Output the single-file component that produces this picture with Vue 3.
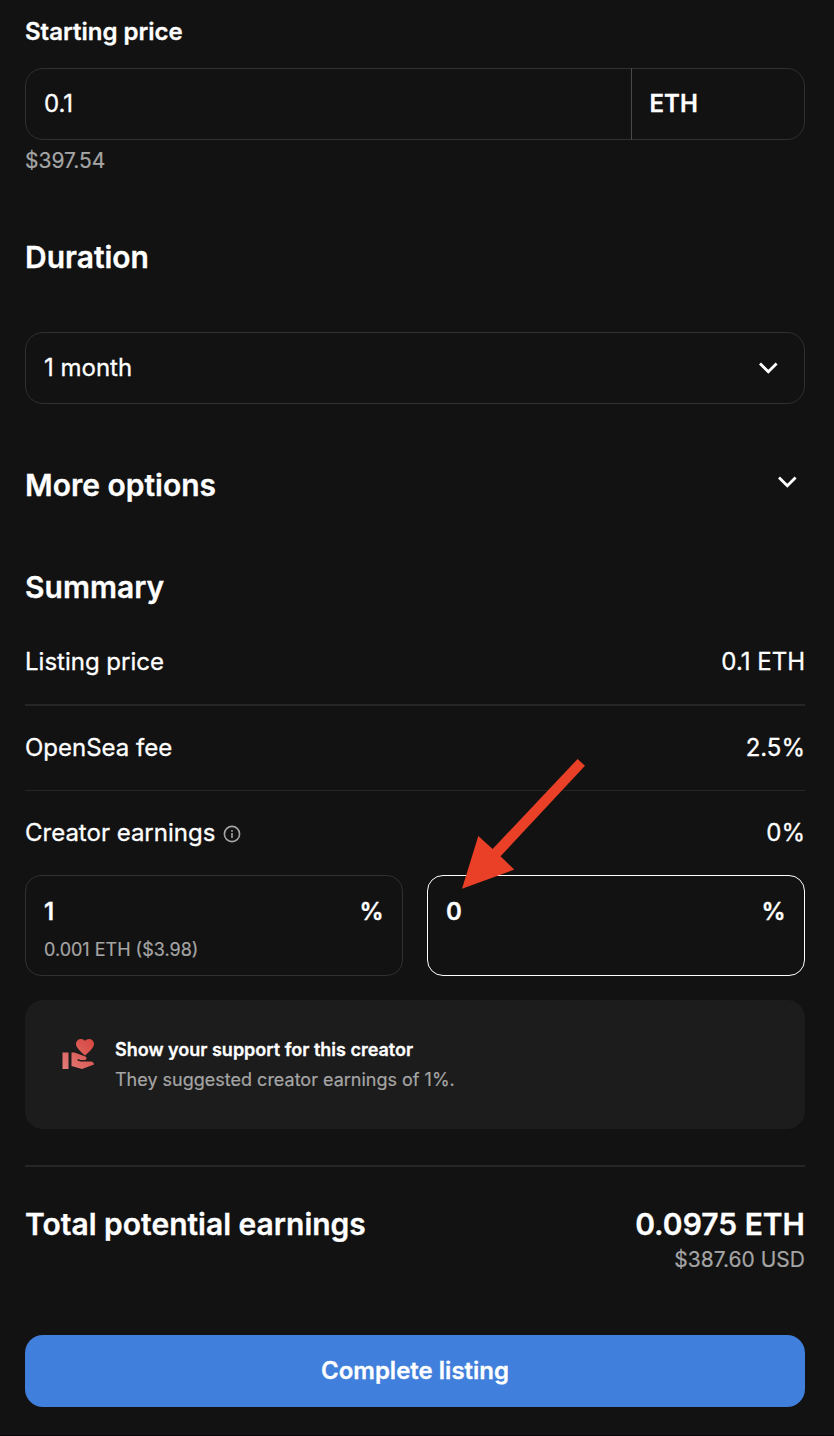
<script setup>
const chevron = 'M2 2.4 L10.3 10.7 L18.6 2.4'
const fees = [
  { label: 'Listing price', value: '0.1 ETH', cls: 'listing' },
  { label: 'OpenSea fee', value: '2.5%', cls: 'fee' },
]
</script>

<template>
  <main class="page">
    <h3 class="label">Starting price</h3>
    <div class="field price">
      <div class="amount">0.1</div>
      <div class="currency">ETH</div>
    </div>
    <div class="fiat">$397.54</div>

    <h2 class="heading duration">Duration</h2>
    <div class="field select">
      <span>1 month</span>
      <svg class="chev" viewBox="0 0 20.6 13"><path :d="chevron" /></svg>
    </div>

    <div class="more">
      <h2 class="heading">More options</h2>
      <svg class="chev" viewBox="0 0 20.6 13"><path :d="chevron" /></svg>
    </div>

    <h2 class="heading summary">Summary</h2>
    <div v-for="f in fees" :key="f.label" class="row" :class="f.cls">
      <span>{{ f.label }}</span><span>{{ f.value }}</span>
    </div>
    <div class="row creator">
      <span class="with-info">Creator earnings
        <svg class="info" viewBox="0 0 18 18">
          <circle cx="9" cy="9" r="7.6" />
          <path d="M9 8v5M9 5.1v1.7" />
        </svg>
      </span>
      <span>0%</span>
    </div>

    <div class="boxes">
      <div class="box">
        <div class="box-top"><span>1</span><span>%</span></div>
        <div class="box-sub">0.001 ETH ($3.98)</div>
      </div>
      <div class="box active">
        <div class="box-top"><span>0</span><span>%</span></div>
        <svg class="arrow" viewBox="0 0 126 132">
          <polygon points="116.6,1 124,7.8 39.5,98.3 53.2,111.6 1,130.8 17.3,78 31.6,91" />
        </svg>
      </div>
    </div>

    <section class="support">
      <svg class="hand" viewBox="0 0 24 24">
        <defs>
          <linearGradient id="warm" x1="1" y1="0" x2="0" y2="1">
            <stop offset="0" stop-color="#d8453e" />
            <stop offset="1" stop-color="#e17d7a" />
          </linearGradient>
        </defs>
        <path fill="url(#warm)" d="M1 11h4v11H1zm15-7.75C16.65 2.49 17.66 2 18.7 2 20.55 2 22 3.45 22 5.3c0 2.27-2.91 4.9-6 7.7-3.09-2.81-6-5.44-6-7.7C10 3.45 11.45 2 13.3 2c1.04 0 2.05.49 2.7 1.25zM20 17h-7l-2.09-.73.33-.94L13 16h2.82c.65 0 1.18-.53 1.18-1.18 0-.49-.31-.93-.77-1.11L8.97 11H7v9.02L14 22l8.01-3c-.01-1.1-.9-2-2.01-2z" />
      </svg>
      <div>
        <div class="support-title">Show your support for this creator</div>
        <div class="support-text">They suggested creator earnings of 1%.</div>
      </div>
    </section>

    <div class="total">
      <h2 class="heading">Total potential earnings</h2>
      <div class="total-values">
        <div class="heading">0.0975 ETH</div>
        <div class="usd">$387.60 USD</div>
      </div>
    </div>

    <button class="complete">Complete listing</button>
  </main>
</template>

<style>
body {
  background: #121212;
}
</style>

<style scoped>
.page {
  box-sizing: border-box;
  height: 1436px;
  padding: 16px 29px 0 25px;
  border-bottom: 1px solid #070507;
  background: #121212;
  color: #fff;
  font-family: Inter, "Liberation Sans", sans-serif;
  font-size: 24px;
  line-height: 32px;
  -webkit-text-stroke: 0.3px currentColor;
  overflow: hidden;
}
h2, h3 { margin: 0; }
.label { font-size: 24px; font-weight: 600; height: 52px; }
.heading { font-size: 30px; font-weight: 600; line-height: 40px; white-space: nowrap; }
.field {
  box-sizing: border-box;
  height: 72px;
  border: 1px solid #303030;
  border-radius: 18px;
  display: flex;
  align-items: center;
}
.amount { flex: 1; padding-left: 18px; }
.currency {
  box-sizing: border-box;
  width: 174px;
  height: 72px;
  margin: -1px -1px -1px 0;
  padding-left: 17.5px;
  border-left: 1px solid #4a4a4a;
  line-height: 72px;
  font-weight: 600;
}
.fiat { margin-top: 6px; height: 30px; line-height: 30px; font-size: 21px; color: #a5a5a5; -webkit-text-stroke-width: 0.2px; }
.duration { margin: 61px 0 55px; }
.select { justify-content: space-between; padding: 0 25.5px 0 18px; }
.select .chev { margin-top: -1px; }
.chev { width: 20.6px; height: 13px; fill: none; stroke: #fff; stroke-width: 2.8; }
.more { display: flex; justify-content: space-between; align-items: flex-start; margin-top: 61px; padding-right: 7.5px; }
.more .chev { margin-top: 9.5px; }
.summary { margin: 62px 0 39px; }
.row { display: flex; justify-content: space-between; align-items: flex-start; box-sizing: border-box; }
.listing { height: 60px; border-bottom: 2px solid #262626; }
.fee { height: 85px; padding-top: 26px; border-bottom: 1px solid #262626; }
.creator { height: 84px; padding-top: 26px; }
.with-info { display: flex; align-items: center; gap: 7.5px; }
.info { width: 18px; height: 18px; margin-top: 2px; fill: none; stroke: #a3a3a3; stroke-width: 1.6; }
.boxes { display: grid; grid-template-columns: 1fr 1fr; gap: 24px; }
.box {
  position: relative;
  box-sizing: border-box;
  height: 101px;
  padding: 20px 18.5px 0 18px;
  border: 1px solid #303030;
  border-radius: 16px;
}
.box.active { border-color: #fff; }
.box-top { display: flex; justify-content: space-between; font-weight: 600; }
.box-sub { margin-top: 8px; font-size: 18px; line-height: 28px; color: #a5a5a5; -webkit-text-stroke-width: 0.2px; }
.arrow { position: absolute; left: 33px; top: -118px; width: 126px; height: 132px; fill: #ea4027; }
.support {
  box-sizing: border-box;
  height: 129px;
  margin-top: 24px;
  padding: 35px 35.5px 0;
  border-radius: 18px;
  background: #1c1c1c;
  display: flex;
  gap: 18.5px;
  font-size: 18px;
  line-height: 30px;
}
.hand { width: 36px; height: 36px; margin-top: 1px; }
.support-title { font-weight: 600; }
.support-text { color: #a5a5a5; -webkit-text-stroke-width: 0.2px; }
.total {
  display: flex;
  justify-content: space-between;
  box-sizing: border-box;
  height: 170px;
  margin-top: 36px;
  padding-top: 37px;
  border-top: 2px solid #262626;
}
.total-values { text-align: right; }
.usd { font-size: 21px; line-height: 32px; color: #a5a5a5; -webkit-text-stroke-width: 0.2px; }
.complete {
  display: block;
  width: 100%;
  height: 72px;
  padding: 0;
  border: 0;
  border-radius: 18px;
  background: #407fdb;
  color: #fff;
  font: 600 24px/72px Inter, "Liberation Sans", sans-serif;
  -webkit-text-stroke: 0.3px currentColor;
}
</style>
